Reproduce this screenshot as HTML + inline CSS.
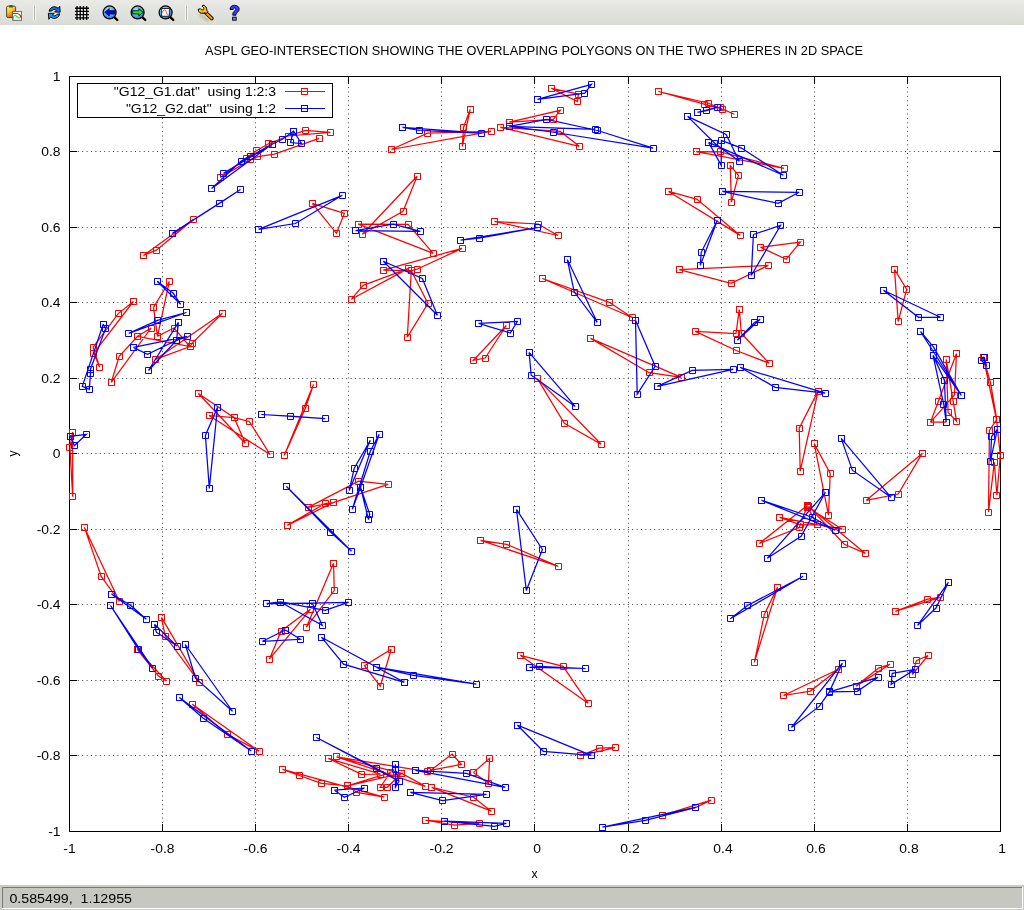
<!DOCTYPE html><html><head><meta charset="utf-8"><style>
html,body{margin:0;padding:0;width:1024px;height:910px;overflow:hidden;background:#fff;}
svg{display:block;position:absolute;left:0;top:0;}
text{font-family:"Liberation Sans",sans-serif;}
svg{will-change:transform;}
</style></head><body>
<svg width="1024" height="910" viewBox="0 0 1024 910">
<defs>
<linearGradient id="tbg" x1="0" y1="0" x2="0" y2="1"><stop offset="0" stop-color="#e9eae6"/><stop offset="1" stop-color="#d9dbd5"/></linearGradient>
<linearGradient id="clip" x1="0" y1="0" x2="0.6" y2="1"><stop offset="0" stop-color="#ffff48"/><stop offset="0.45" stop-color="#f8d030"/><stop offset="1" stop-color="#e04a08"/></linearGradient>
<radialGradient id="lens" cx="0.4" cy="0.35" r="0.7"><stop offset="0" stop-color="#b8e4ff"/><stop offset="0.6" stop-color="#4aaaf0"/><stop offset="1" stop-color="#1a78d0"/></radialGradient>
<linearGradient id="wr" x1="0" y1="0" x2="1" y2="1"><stop offset="0" stop-color="#ffff20"/><stop offset="0.45" stop-color="#ffd000"/><stop offset="1" stop-color="#ff9a00"/></linearGradient>
</defs>
<rect x="0" y="0" width="1024" height="25" fill="url(#tbg)"/>
<g>
<rect x="6.6" y="6.1" width="9" height="11.4" rx="1.5" fill="url(#clip)" stroke="#3c3418" stroke-width="0.9"/>
<path d="M9.2 7.6V6.1Q9.2 5 10.3 5H11.7Q12.8 5 12.8 6.1V7.6Z" fill="#4a4a4a"/>
<rect x="12.6" y="11.6" width="8.9" height="8.7" fill="#fff" stroke="#5a5a5a" stroke-width="0.9"/>
<path d="M12.9 20.1C13.2 18 13.6 15.4 14.8 15.2C16 15 16.6 16.2 17.4 17.2C18.2 18.2 19.2 18 19.8 17.6C20.6 17 21.1 15.4 21.5 13.8" stroke="#10e810" stroke-width="1.1" fill="none"/>
<path d="M12.7 13.5H17.4C18.6 13.5 19.6 14.6 20.4 15.9L21.5 17.8" stroke="#ff1010" stroke-width="1.1" fill="none"/>
</g>
<path d="M33.5 5V20.5M35.5 5V20.5" stroke="#f6f6f4" stroke-width="1"/><path d="M34.5 5.5V20" stroke="#b4b6b0" stroke-width="1"/>
<g stroke="#000" stroke-width="0.9" stroke-linejoin="round">
<path d="M49 11.2C49.6 8 52.4 6.4 55.2 6.8C56.4 7 57.4 7.6 58.1 8.3L59.8 6.3L60.2 12.2L54.6 12L56.4 10.1C55.1 9.1 52.9 9.1 51.9 10.9Z" fill="#1a6ae8"/>
<path d="M59.8 13.8C59.2 17 56.4 18.8 53.6 18.4C52.4 18.2 51.4 17.6 50.7 16.9L48.8 19.3L48.4 13.3L54.2 13.3L52.4 15.2C53.7 16.2 55.9 16.2 56.9 14.3Z" fill="#1a98f0"/>
</g>
<rect x="77" y="8.2" width="9.6" height="9.6" fill="#fff"/>
<g stroke="#000" stroke-width="1.35">
<path d="M77 6V20M80.2 6V20M83.4 6V20M86.6 6V20M75 8.2H89M75 11.4H89M75 14.6H89M75 17.8H89"/>
</g>
<g>
<path d="M113.5 16.3L117.3 20" stroke="#000" stroke-width="2.4" stroke-linecap="round"/>
<circle cx="109.6" cy="12.4" r="6.5" fill="url(#lens)" stroke="#000" stroke-width="1.2"/>
<path d="M104.8 12.3L109.2 8.6V10.7H114.8V13.9H109.2V16Z" fill="#0000ff" stroke="#000" stroke-width="0.8" stroke-linejoin="round"/>
</g>
<g>
<path d="M141.5 16.3L145.3 20" stroke="#000" stroke-width="2.4" stroke-linecap="round"/>
<circle cx="137.6" cy="12.4" r="6.5" fill="url(#lens)" stroke="#000" stroke-width="1.2"/>
<path d="M143.2 12.3L138.8 8.6V10.7H132.4V13.9H138.8V16Z" fill="#00ee00" stroke="#000" stroke-width="0.8" stroke-linejoin="round"/>
</g>
<g>
<path d="M169.5 16.3L173.3 20" stroke="#000" stroke-width="2.4" stroke-linecap="round"/>
<circle cx="165.6" cy="12.4" r="6.5" fill="url(#lens)" stroke="#000" stroke-width="1.2"/>
<rect x="161.7" y="8.6" width="7.6" height="7.6" fill="#fff" stroke="#000" stroke-width="0.8"/>
<path d="M162 12.8C162.8 11.8 163.6 9.8 164.6 9.8C165.8 9.8 166.4 12.4 167 13.8C167.5 14.9 168.3 15.2 169.2 15.2" stroke="#ee1010" stroke-width="0.8" fill="none"/>
</g>
<path d="M185.5 5V20.5M187.5 5V20.5" stroke="#f6f6f4" stroke-width="1"/><path d="M186.5 5.5V20" stroke="#b4b6b0" stroke-width="1"/>
<g>
<filter id="blr" x="-50%" y="-50%" width="200%" height="200%"><feGaussianBlur stdDeviation="0.8"/></filter>
<path d="M200.5 15L208 20.4" stroke="#a89e86" stroke-width="3" stroke-linecap="round" opacity="0.55" filter="url(#blr)"/>
<path d="M205.2 12.2L211.8 18.4" stroke="#000" stroke-width="3.8" stroke-linecap="round"/>
<path d="M205.2 12.2L211.8 18.4" stroke="#ff9c00" stroke-width="2" stroke-linecap="round"/>
<path d="M203 5.1C205.4 5.6 207 7.6 206.8 10.3L208 11.8L206.2 13.6L204.8 12.8C202.6 14 199.6 13.2 198.7 11.4L198.2 9.3L200.5 8.7C201 9.8 202.3 10.3 203.3 9.7C204.2 9.1 204 7.8 203.2 7.2L202.1 6.1Z" fill="url(#wr)" stroke="#000" stroke-width="1" stroke-linejoin="round"/>
</g>
<g>
<path d="M230 9.4C230 6.4 232.2 5.3 234.5 5.3C237.4 5.3 239.2 6.9 239.2 9.2C239.2 11.6 237.2 12.3 236.4 13.2C236 13.7 236 14.4 236 15.2H232.8C232.8 13.7 232.9 12.5 233.9 11.6C234.8 10.8 235.8 10.2 235.8 9.3C235.8 8.4 235.2 8 234.5 8C233.6 8 233.2 8.6 233.2 9.6Z" fill="#3a3aff" stroke="#000" stroke-width="0.9" stroke-linejoin="round"/>
<rect x="232.6" y="17.2" width="3.6" height="3" fill="#7a7aff" stroke="#000" stroke-width="0.9"/>
</g>

<rect x="0" y="885" width="1024" height="25" fill="#c9cbc5"/>
<rect x="2" y="887" width="1021" height="22" fill="#c5c7c0"/>
<path d="M2.5 908V887.5H1022" stroke="#7a7b76" fill="none"/>
<path d="M2 908.5H1022.5V887" stroke="#ffffff" fill="none"/>
<path d="M162.5 831V76M255.5 831V76M348.5 831V76M441.5 831V76M534.5 831V76M628.5 831V76M721.5 831V76M814.5 831V76M907.5 831V76" stroke="#404040" stroke-width="1" stroke-dasharray="1 3.4" stroke-dashoffset="0.7" fill="none"/>
<path d="M69 151.5H1001M69 227.5H1001M69 302.5H1001M69 378.5H1001M69 453.5H1001M69 529.5H1001M69 604.5H1001M69 680.5H1001M69 755.5H1001" stroke="#404040" stroke-width="1" stroke-dasharray="1 3.4" fill="none"/>
<path d="M69.5 832V824M69.5 76V84M162.5 832V824M162.5 76V84M255.5 832V824M255.5 76V84M348.5 832V824M348.5 76V84M441.5 832V824M441.5 76V84M534.5 832V824M534.5 76V84M628.5 832V824M628.5 76V84M721.5 832V824M721.5 76V84M814.5 832V824M814.5 76V84M907.5 832V824M907.5 76V84M1000.5 832V824M1000.5 76V84M69 76.5H77M1001 76.5H993M69 151.5H77M1001 151.5H993M69 227.5H77M1001 227.5H993M69 302.5H77M1001 302.5H993M69 378.5H77M1001 378.5H993M69 453.5H77M1001 453.5H993M69 529.5H77M1001 529.5H993M69 604.5H77M1001 604.5H993M69 680.5H77M1001 680.5H993M69 755.5H77M1001 755.5H993M69 831.5H77M1001 831.5H993" stroke="#000" stroke-width="1" fill="none"/>
<rect x="69.5" y="76.5" width="931" height="755" stroke="#000" stroke-width="1" fill="none"/>
<text transform="translate(60.6,835.9) scale(1.14,1)" font-size="12.2" text-anchor="end">-1</text>
<text transform="translate(69.5,853.3) scale(1.14,1)" font-size="12.2" text-anchor="middle">-1</text>
<text transform="translate(60.6,759.9) scale(1.14,1)" font-size="12.2" text-anchor="end">-0.8</text>
<text transform="translate(162.5,853.3) scale(1.14,1)" font-size="12.2" text-anchor="middle">-0.8</text>
<text transform="translate(60.6,684.9) scale(1.14,1)" font-size="12.2" text-anchor="end">-0.6</text>
<text transform="translate(255.5,853.3) scale(1.14,1)" font-size="12.2" text-anchor="middle">-0.6</text>
<text transform="translate(60.6,608.9) scale(1.14,1)" font-size="12.2" text-anchor="end">-0.4</text>
<text transform="translate(348.5,853.3) scale(1.14,1)" font-size="12.2" text-anchor="middle">-0.4</text>
<text transform="translate(60.6,533.9) scale(1.14,1)" font-size="12.2" text-anchor="end">-0.2</text>
<text transform="translate(441.5,853.3) scale(1.14,1)" font-size="12.2" text-anchor="middle">-0.2</text>
<text transform="translate(60.6,457.9) scale(1.14,1)" font-size="12.2" text-anchor="end">0</text>
<text transform="translate(537.0,853.3) scale(1.14,1)" font-size="12.2" text-anchor="middle">0</text>
<text transform="translate(60.6,382.9) scale(1.14,1)" font-size="12.2" text-anchor="end">0.2</text>
<text transform="translate(630.0,853.3) scale(1.14,1)" font-size="12.2" text-anchor="middle">0.2</text>
<text transform="translate(60.6,306.9) scale(1.14,1)" font-size="12.2" text-anchor="end">0.4</text>
<text transform="translate(723.0,853.3) scale(1.14,1)" font-size="12.2" text-anchor="middle">0.4</text>
<text transform="translate(60.6,231.9) scale(1.14,1)" font-size="12.2" text-anchor="end">0.6</text>
<text transform="translate(816.0,853.3) scale(1.14,1)" font-size="12.2" text-anchor="middle">0.6</text>
<text transform="translate(60.6,155.9) scale(1.14,1)" font-size="12.2" text-anchor="end">0.8</text>
<text transform="translate(909.0,853.3) scale(1.14,1)" font-size="12.2" text-anchor="middle">0.8</text>
<text transform="translate(60.6,80.9) scale(1.14,1)" font-size="12.2" text-anchor="end">1</text>
<text transform="translate(1002.0,853.3) scale(1.14,1)" font-size="12.2" text-anchor="middle">1</text>
<text x="534.5" y="878" font-size="12.2" text-anchor="middle">x</text>
<text transform="translate(17,453.5) rotate(-90)" font-size="12.2" text-anchor="middle">y</text>
<text x="205" y="54.6" font-size="12.2" textLength="658" lengthAdjust="spacingAndGlyphs">ASPL GEO-INTERSECTION SHOWING THE OVERLAPPING POLYGONS ON THE TWO SPHERES IN 2D SPACE</text>
<path d="M143.4 255.4 L156.4 250.2 L193.3 219.4 L143.4 255.4 M220.2 177.5 L246.1 158 L256.3 150.8 L268.5 143.8 L288 136 L330.4 132.3 L305.5 130.4 L288 136 M319.2 138.4 L274.4 154.2 L257.7 156.7 L250.7 159.9 L220.2 177.5 M153.5 307.3 L169.3 281.5 L157.5 336.3 L153.5 307.3 M111.3 382.3 L151.1 328 L137.6 336.3 L119.2 356.4 L111.3 382.3 M137.6 336.3 L190 346.5 L174 328 L157.5 336.3 M222.4 313.2 L192 343.4 L190 346.5 L155.5 359.4 L222.4 313.2 M133.4 301.5 L118.3 313.6 L93.2 347.2 L99.6 367.3 L93.8 353.1 L133.4 301.5 M198.35 393.5 L234.2 417.7 L245.2 443.3 L198.35 393.5 M209 415.5 L234.2 417.7 L249.3 421.5 L270.1 454.5 L209 415.5 M284.2 455.5 L305.4 408.3 L313.5 384.5 L284.2 455.5 M72.7 432 L69.9 447.4 L72.7 496.7 L72.7 432 M84.4 527.4 L101.2 576.4 L119.4 601.5 L84.4 527.4 M161.5 617.4 L199.4 682.3 L165.2 636.1 L161.5 617.4 M137.2 649.4 L166.2 681 L158.5 676.1 L137.2 649.4 M192.3 704.2 L227.2 734.4 L259 751.1 L192.3 704.2 M333.5 563.3 L334.3 590.4 L306.4 627.2 L333.5 563.3 M310.3 609.3 L281.2 631 L269.4 659.2 L310.3 609.3 M391.25 649.2 L364.5 665.6 L380.3 686.25 L391.25 649.2 M430.5 770.4 L452.2 754 L461.3 764.3 L430.5 770.4 M473.5 772.4 L489.6 758.4 L488.4 783.3 L473.5 772.4 M431.6 787.3 L473.5 797.25 L491.3 811.2 L431.6 787.3 M425.4 820.25 L454.4 825.1 L479.3 823.3 L425.4 820.25 M336.6 756.9 L427.2 771.6 M328.3 758.4 L361.5 774.4 L380.6 774.1 L328.3 758.4 M336.6 756.9 L425.4 786.3 L401.7 773.4 L336.6 756.9 M347.3 785.8 L390.4 772.6 L380.2 787.25 L387.2 787.25 L401.5 773.3 L347.3 785.8 M282.45 769.4 L299.3 775.5 L321.3 783.3 L347.3 785.8 L356.9 792.4 L384.25 797.2 L282.45 769.4 M391.4 149.5 L427.5 133.1 L491.1 131.4 L391.4 149.5 M470.2 109.4 L463.5 127.5 L462.3 146.3 L470.2 109.4 M551.2 88.3 L578.4 94.1 L577.4 101.5 L551.2 88.3 M509.3 122.05 L560.3 110.3 L553.3 119.4 L509.3 122.05 M500.2 127.3 L560.3 131.4 L579.3 146.3 L500.2 127.3 M417.1 176.3 L403.1 211.2 L362.4 234.2 L417.1 176.3 M358.2 224.1 L408.1 224.3 L433.2 253.4 L358.2 224.1 M383.3 270.1 L462 248.4 L417.5 269 L411.3 270.7 L383.3 270.1 M363.2 285.3 L408.1 268.6 L351.3 299.3 L363.2 285.3 M411.3 270.7 L407.3 337.1 L428 303.5 L411.3 270.7 M312.3 203.4 L344.4 213.5 L336.4 233.4 L312.3 203.4 M494.5 221.5 L538.1 224 L558 235.5 L494.5 221.5 M542.4 278.5 L609.2 302.3 L632.2 317.5 L542.4 278.5 M506.3 325.5 L473.4 360.3 L485.2 358 L506.3 325.5 M537.4 378.6 L564.3 423.4 L601.2 444.2 L537.4 378.6 M308.15 507.4 L358.5 481.2 L388.15 484.3 L333.1 502.6 L308.15 507.4 M287.2 525.4 L325.1 503.5 L333.1 502.6 L287.2 525.4 M480.5 540.3 L506.5 544.3 L558.2 566.3 L480.5 540.3 M520.2 655.3 L563.1 666.3 L588.1 703.2 L520.2 655.3 M580.4 755.7 L599.3 748.2 L615.2 747.6 L580.4 755.7 M662.2 815.3 L695.9 807.3 L711.2 800.2 L662.2 815.3 M658.45 91.5 L704.2 104.1 L722.6 109.05 L734.4 114.3 L708.55 103.25 L658.45 91.5 M696.25 151.6 L720 151.9 L784.1 168.3 L696.25 151.6 M730.2 165.3 L738.4 175.3 L731.4 202.2 L730.2 165.3 M668.5 191.45 L697.1 199.35 L740.2 235.4 L668.5 191.45 M760.4 247.3 L800.3 242.1 L786.25 259.3 L760.4 247.3 M679.2 269.7 L768.3 265.45 L731.05 283.4 L679.2 269.7 M590.55 338.4 L649.1 372.7 L681.4 377.4 L590.55 338.4 M739.3 309.5 L736 333.5 L695.2 331.4 L736.2 350.5 L769.05 363.2 L741.4 333.5 L739.3 309.5 M818.1 391.1 L799.2 428.2 L800.2 471.2 L818.1 391.1 M814.2 443.6 L830.2 473.5 L828.5 515.1 L814.2 443.6 M922.2 453.4 L866.4 500.3 L898.2 494 L922.2 453.4 M807.3 505.5 L759.4 543.4 L799.2 527.6 L807.3 505.5 M779.65 517.4 L817.1 524.6 L800.3 524.9 L779.65 517.4 M808.6 506.4 L844.3 544.2 L865.4 553.4 L808.6 506.4 M807.6 507.2 L842.3 529.2 L817.1 524.6 L807.6 507.2 M777.5 587.3 L764.3 614.4 L754.4 662.3 L777.5 587.3 M838.45 669.2 L810.4 691.1 L783.5 695.5 L838.45 669.2 M895.25 611.3 L927.6 599.2 L940.4 597.45 L895.25 611.3 M856.05 686.1 L878.55 668.1 L890 664.3 L856.05 686.1 M912.3 674.6 L916.35 660.6 L928.1 655.5 L912.3 674.6 M894.5 269.4 L906.6 289.3 L898.2 321.5 L894.5 269.4 M946.2 359.3 L948.1 412.4 L956.5 421.2 L953.25 401.55 L946.2 359.3 M956.5 353.5 L954.5 395.1 L930.5 422.1 L938.4 401.2 L956.5 353.5 M930.5 422.1 L946.2 422.1 M983.2 357 L990.5 382.6 L996.75 419.3 L989.45 430.35 L988.5 512.1 L994.3 462.4 L996.9 495.1 L1000.3 455.25 L996.5 419.6 L983.2 357 M720.4 107.6" stroke="#ff0000" stroke-width="1.25" fill="none" stroke-linejoin="miter"/>
<path d="M140.5 252.5h6v6h-6z M153.5 247.5h6v6h-6z M190.5 216.5h6v6h-6z M140.5 252.5h6v6h-6z M217.5 174.5h6v6h-6z M243.5 155.5h6v6h-6z M253.5 147.5h6v6h-6z M265.5 140.5h6v6h-6z M285.5 133.5h6v6h-6z M327.5 129.5h6v6h-6z M302.5 127.5h6v6h-6z M285.5 133.5h6v6h-6z M316.5 135.5h6v6h-6z M271.5 151.5h6v6h-6z M254.5 153.5h6v6h-6z M247.5 156.5h6v6h-6z M217.5 174.5h6v6h-6z M150.5 304.5h6v6h-6z M166.5 278.5h6v6h-6z M154.5 333.5h6v6h-6z M150.5 304.5h6v6h-6z M108.5 379.5h6v6h-6z M148.5 325.5h6v6h-6z M134.5 333.5h6v6h-6z M116.5 353.5h6v6h-6z M108.5 379.5h6v6h-6z M134.5 333.5h6v6h-6z M187.5 343.5h6v6h-6z M171.5 325.5h6v6h-6z M154.5 333.5h6v6h-6z M219.5 310.5h6v6h-6z M189.5 340.5h6v6h-6z M187.5 343.5h6v6h-6z M152.5 356.5h6v6h-6z M219.5 310.5h6v6h-6z M130.5 298.5h6v6h-6z M115.5 310.5h6v6h-6z M90.5 344.5h6v6h-6z M96.5 364.5h6v6h-6z M90.5 350.5h6v6h-6z M130.5 298.5h6v6h-6z M195.5 390.5h6v6h-6z M231.5 414.5h6v6h-6z M242.5 440.5h6v6h-6z M195.5 390.5h6v6h-6z M206.5 412.5h6v6h-6z M231.5 414.5h6v6h-6z M246.5 418.5h6v6h-6z M267.5 451.5h6v6h-6z M206.5 412.5h6v6h-6z M281.5 452.5h6v6h-6z M302.5 405.5h6v6h-6z M310.5 381.5h6v6h-6z M281.5 452.5h6v6h-6z M69.5 429.5h6v6h-6z M66.5 444.5h6v6h-6z M69.5 493.5h6v6h-6z M69.5 429.5h6v6h-6z M81.5 524.5h6v6h-6z M98.5 573.5h6v6h-6z M116.5 598.5h6v6h-6z M81.5 524.5h6v6h-6z M158.5 614.5h6v6h-6z M196.5 679.5h6v6h-6z M162.5 633.5h6v6h-6z M158.5 614.5h6v6h-6z M134.5 646.5h6v6h-6z M163.5 678.5h6v6h-6z M155.5 673.5h6v6h-6z M134.5 646.5h6v6h-6z M189.5 701.5h6v6h-6z M224.5 731.5h6v6h-6z M256.5 748.5h6v6h-6z M189.5 701.5h6v6h-6z M330.5 560.5h6v6h-6z M331.5 587.5h6v6h-6z M303.5 624.5h6v6h-6z M330.5 560.5h6v6h-6z M307.5 606.5h6v6h-6z M278.5 628.5h6v6h-6z M266.5 656.5h6v6h-6z M307.5 606.5h6v6h-6z M388.5 646.5h6v6h-6z M361.5 662.5h6v6h-6z M377.5 683.5h6v6h-6z M388.5 646.5h6v6h-6z M427.5 767.5h6v6h-6z M449.5 751.5h6v6h-6z M458.5 761.5h6v6h-6z M427.5 767.5h6v6h-6z M470.5 769.5h6v6h-6z M486.5 755.5h6v6h-6z M485.5 780.5h6v6h-6z M470.5 769.5h6v6h-6z M428.5 784.5h6v6h-6z M470.5 794.5h6v6h-6z M488.5 808.5h6v6h-6z M428.5 784.5h6v6h-6z M422.5 817.5h6v6h-6z M451.5 822.5h6v6h-6z M476.5 820.5h6v6h-6z M422.5 817.5h6v6h-6z M333.5 753.5h6v6h-6z M424.5 768.5h6v6h-6z M325.5 755.5h6v6h-6z M358.5 771.5h6v6h-6z M377.5 771.5h6v6h-6z M325.5 755.5h6v6h-6z M333.5 753.5h6v6h-6z M422.5 783.5h6v6h-6z M398.5 770.5h6v6h-6z M333.5 753.5h6v6h-6z M344.5 782.5h6v6h-6z M387.5 769.5h6v6h-6z M377.5 784.5h6v6h-6z M384.5 784.5h6v6h-6z M398.5 770.5h6v6h-6z M344.5 782.5h6v6h-6z M279.5 766.5h6v6h-6z M296.5 772.5h6v6h-6z M318.5 780.5h6v6h-6z M344.5 782.5h6v6h-6z M353.5 789.5h6v6h-6z M381.5 794.5h6v6h-6z M279.5 766.5h6v6h-6z M388.5 146.5h6v6h-6z M424.5 130.5h6v6h-6z M488.5 128.5h6v6h-6z M388.5 146.5h6v6h-6z M467.5 106.5h6v6h-6z M460.5 124.5h6v6h-6z M459.5 143.5h6v6h-6z M467.5 106.5h6v6h-6z M548.5 85.5h6v6h-6z M575.5 91.5h6v6h-6z M574.5 98.5h6v6h-6z M548.5 85.5h6v6h-6z M506.5 119.5h6v6h-6z M557.5 107.5h6v6h-6z M550.5 116.5h6v6h-6z M506.5 119.5h6v6h-6z M497.5 124.5h6v6h-6z M557.5 128.5h6v6h-6z M576.5 143.5h6v6h-6z M497.5 124.5h6v6h-6z M414.5 173.5h6v6h-6z M400.5 208.5h6v6h-6z M359.5 231.5h6v6h-6z M414.5 173.5h6v6h-6z M355.5 221.5h6v6h-6z M405.5 221.5h6v6h-6z M430.5 250.5h6v6h-6z M355.5 221.5h6v6h-6z M380.5 267.5h6v6h-6z M459.5 245.5h6v6h-6z M414.5 266.5h6v6h-6z M408.5 267.5h6v6h-6z M380.5 267.5h6v6h-6z M360.5 282.5h6v6h-6z M405.5 265.5h6v6h-6z M348.5 296.5h6v6h-6z M360.5 282.5h6v6h-6z M408.5 267.5h6v6h-6z M404.5 334.5h6v6h-6z M425.5 300.5h6v6h-6z M408.5 267.5h6v6h-6z M309.5 200.5h6v6h-6z M341.5 210.5h6v6h-6z M333.5 230.5h6v6h-6z M309.5 200.5h6v6h-6z M491.5 218.5h6v6h-6z M535.5 221.5h6v6h-6z M555.5 232.5h6v6h-6z M491.5 218.5h6v6h-6z M539.5 275.5h6v6h-6z M606.5 299.5h6v6h-6z M629.5 314.5h6v6h-6z M539.5 275.5h6v6h-6z M503.5 322.5h6v6h-6z M470.5 357.5h6v6h-6z M482.5 355.5h6v6h-6z M503.5 322.5h6v6h-6z M534.5 375.5h6v6h-6z M561.5 420.5h6v6h-6z M598.5 441.5h6v6h-6z M534.5 375.5h6v6h-6z M305.5 504.5h6v6h-6z M355.5 478.5h6v6h-6z M385.5 481.5h6v6h-6z M330.5 499.5h6v6h-6z M305.5 504.5h6v6h-6z M284.5 522.5h6v6h-6z M322.5 500.5h6v6h-6z M330.5 499.5h6v6h-6z M284.5 522.5h6v6h-6z M477.5 537.5h6v6h-6z M503.5 541.5h6v6h-6z M555.5 563.5h6v6h-6z M477.5 537.5h6v6h-6z M517.5 652.5h6v6h-6z M560.5 663.5h6v6h-6z M585.5 700.5h6v6h-6z M517.5 652.5h6v6h-6z M577.5 752.5h6v6h-6z M596.5 745.5h6v6h-6z M612.5 744.5h6v6h-6z M577.5 752.5h6v6h-6z M659.5 812.5h6v6h-6z M692.5 804.5h6v6h-6z M708.5 797.5h6v6h-6z M659.5 812.5h6v6h-6z M655.5 88.5h6v6h-6z M701.5 101.5h6v6h-6z M719.5 106.5h6v6h-6z M731.5 111.5h6v6h-6z M705.5 100.5h6v6h-6z M655.5 88.5h6v6h-6z M693.5 148.5h6v6h-6z M717.5 148.5h6v6h-6z M781.5 165.5h6v6h-6z M693.5 148.5h6v6h-6z M727.5 162.5h6v6h-6z M735.5 172.5h6v6h-6z M728.5 199.5h6v6h-6z M727.5 162.5h6v6h-6z M665.5 188.5h6v6h-6z M694.5 196.5h6v6h-6z M737.5 232.5h6v6h-6z M665.5 188.5h6v6h-6z M757.5 244.5h6v6h-6z M797.5 239.5h6v6h-6z M783.5 256.5h6v6h-6z M757.5 244.5h6v6h-6z M676.5 266.5h6v6h-6z M765.5 262.5h6v6h-6z M728.5 280.5h6v6h-6z M676.5 266.5h6v6h-6z M587.5 335.5h6v6h-6z M646.5 369.5h6v6h-6z M678.5 374.5h6v6h-6z M587.5 335.5h6v6h-6z M736.5 306.5h6v6h-6z M733.5 330.5h6v6h-6z M692.5 328.5h6v6h-6z M733.5 347.5h6v6h-6z M766.5 360.5h6v6h-6z M738.5 330.5h6v6h-6z M736.5 306.5h6v6h-6z M815.5 388.5h6v6h-6z M796.5 425.5h6v6h-6z M797.5 468.5h6v6h-6z M815.5 388.5h6v6h-6z M811.5 440.5h6v6h-6z M827.5 470.5h6v6h-6z M825.5 512.5h6v6h-6z M811.5 440.5h6v6h-6z M919.5 450.5h6v6h-6z M863.5 497.5h6v6h-6z M895.5 491.5h6v6h-6z M919.5 450.5h6v6h-6z M804.5 502.5h6v6h-6z M756.5 540.5h6v6h-6z M796.5 524.5h6v6h-6z M804.5 502.5h6v6h-6z M776.5 514.5h6v6h-6z M814.5 521.5h6v6h-6z M797.5 521.5h6v6h-6z M776.5 514.5h6v6h-6z M805.5 503.5h6v6h-6z M841.5 541.5h6v6h-6z M862.5 550.5h6v6h-6z M805.5 503.5h6v6h-6z M804.5 504.5h6v6h-6z M839.5 526.5h6v6h-6z M814.5 521.5h6v6h-6z M804.5 504.5h6v6h-6z M774.5 584.5h6v6h-6z M761.5 611.5h6v6h-6z M751.5 659.5h6v6h-6z M774.5 584.5h6v6h-6z M835.5 666.5h6v6h-6z M807.5 688.5h6v6h-6z M780.5 692.5h6v6h-6z M835.5 666.5h6v6h-6z M892.5 608.5h6v6h-6z M924.5 596.5h6v6h-6z M937.5 594.5h6v6h-6z M892.5 608.5h6v6h-6z M853.5 683.5h6v6h-6z M875.5 665.5h6v6h-6z M887.5 661.5h6v6h-6z M853.5 683.5h6v6h-6z M909.5 671.5h6v6h-6z M913.5 657.5h6v6h-6z M925.5 652.5h6v6h-6z M909.5 671.5h6v6h-6z M891.5 266.5h6v6h-6z M903.5 286.5h6v6h-6z M895.5 318.5h6v6h-6z M891.5 266.5h6v6h-6z M943.5 356.5h6v6h-6z M945.5 409.5h6v6h-6z M953.5 418.5h6v6h-6z M950.5 398.5h6v6h-6z M943.5 356.5h6v6h-6z M953.5 350.5h6v6h-6z M951.5 392.5h6v6h-6z M927.5 419.5h6v6h-6z M935.5 398.5h6v6h-6z M953.5 350.5h6v6h-6z M927.5 419.5h6v6h-6z M943.5 419.5h6v6h-6z M980.5 354.5h6v6h-6z M987.5 379.5h6v6h-6z M993.5 416.5h6v6h-6z M986.5 427.5h6v6h-6z M985.5 509.5h6v6h-6z M991.5 459.5h6v6h-6z M993.5 492.5h6v6h-6z M997.5 452.5h6v6h-6z M993.5 416.5h6v6h-6z M980.5 354.5h6v6h-6z M717.5 104.5h6v6h-6z" stroke="#ff0000" stroke-width="1" fill="none"/>
<path d="M172.4 233.4 L219.3 203.4 L240.5 189.4 L172.4 233.4 M211.6 188.4 L241.3 161 L250.4 156.1 L272.2 144.1 L211.6 188.4 M223.5 173.4 L272.2 144.1 L282.4 139.2 L293.6 131.1 L301.4 143.5 L290.5 142.5 L293.6 131.1 M157.3 281.5 L173.3 293.3 L180.6 304.3 L157.3 281.5 M186.4 312.5 L157.5 320.4 L128.7 333.3 L186.4 312.5 M178.4 322.3 L148.5 370.5 L176.6 340.3 L178.4 322.3 M133.3 347.4 L187.4 336.3 L176.6 340.3 L147.5 354.4 L133.3 347.4 M103.2 324.2 L82.3 386.3 L89.3 389.3 L90.5 373.4 L90.5 369.2 L105.6 328.4 L103.2 324.2 M217.5 407.2 L205.4 435.4 L209.3 488.4 L217.5 407.2 M261.5 414.5 L290.3 416.2 L325.2 418.6 L261.5 414.5 M70.4 436.3 L86.3 434.3 L74.4 445.7 L70.4 436.3 M111.5 594 L130.6 605.3 L146.4 619.3 L111.5 594 M110.5 605.5 L138.1 649 L152.6 668.2 L110.5 605.5 M154.5 624.3 L156.3 632.2 L177 646.1 L154.5 624.3 M185.3 644.5 L195.5 678.1 L232.5 711.25 L185.3 644.5 M179.4 697.5 L203.3 718.3 L251.25 751.1 L179.4 697.5 M266.6 603.5 L312.25 603.1 L348.3 602.3 L325.2 610.3 L280.4 602 L266.6 603.5 M280.4 602 L322.2 625.2 L312.25 603.1 M285.4 630 L262.5 641.3 L300.3 639.3 L285.4 630 M321.4 637.2 L343.5 664.2 L404.4 682.3 L321.4 637.2 M376.4 667.2 L413.4 675.3 L476.4 684.2 L376.4 667.2 L404.4 682.3 M410.3 792.4 L486.5 794.3 L442.5 800.5 L410.3 792.4 M415.4 770.4 L466.4 773.4 L505.2 787.3 L415.4 770.4 M444.45 821.1 L506.3 823.3 L494.25 826.25 L444.45 821.1 M395.4 764.3 L395.4 769.7 L399 781.1 L395.4 787.3 L395.4 764.3 M334.45 790.2 L364.5 788 L344.4 797.2 L334.45 790.2 M316.4 737.45 L376.5 768.5 L399 781.1 L316.4 737.45 M402.5 127.3 L419.55 130.5 L481.4 133.1 L402.5 127.3 M537.5 99.4 L591.4 84.3 L584.9 93.2 L537.5 99.4 M509.3 126.45 L546.6 119.4 L597.6 130.5 L653.1 148.1 L553.6 132.25 L509.3 126.45 L595.5 129.3 M355.5 230.6 L393.1 224.1 L420.3 231.4 L355.5 230.6 M383.3 261.3 L422.35 278.4 L437.4 315.2 L383.3 261.3 M258.6 229.3 L295.4 223.5 L342.3 195.3 L258.6 229.3 M460.6 240.1 L479.1 238.2 L537.2 227.7 L460.6 240.1 M567.3 259.6 L574.3 292.1 L597.2 322.3 L567.3 259.6 M478.5 323.4 L517.3 321.45 L510.3 333.05 L478.5 323.4 M529.1 352.4 L531.2 375.2 L575.2 406.4 L529.1 352.4 M286.5 486.5 L330.8 532.3 L351.5 551.2 L286.5 486.5 M370.3 440.3 L354.15 468.5 L349.2 490.5 L370.3 440.3 M379.2 434.3 L370.3 451.2 L352.3 509.2 L360.5 487.2 L379.2 434.3 M360.5 487.2 L369.7 514.15 L368.5 519.7 L360.5 487.2 M516.5 509.4 L542.4 549.5 L526.3 590.5 L516.5 509.4 M529.45 667.4 L539.3 666.3 L585.5 668.5 L529.45 667.4 M517.4 725.2 L543.3 751.3 L591.4 755.3 L517.4 725.2 M602.45 827.2 L645.3 820.3 L695.9 807.3 L602.45 827.2 M687.5 116.4 L726.1 134.4 L739.3 161.25 L714.7 143.3 L687.5 116.4 M708.55 142.4 L783.3 175.3 L741.4 148.1 L721.4 140.5 L721.2 165.3 L708.55 142.4 M697.5 112.4 L706.4 110.6 L717.3 107.3 L697.5 112.4 M722.3 191.45 L799.1 192.3 L778.3 203.4 L722.3 191.45 M717.3 220.45 L701.2 252.3 L700.3 265.3 L717.3 220.45 M753.4 234.5 L780.6 225.4 L751.3 275.5 L753.4 234.5 M635.5 320.35 L655.2 366.3 L637.2 394.2 L635.5 320.35 M760.2 319.3 L754.5 322.4 L737.3 340.25 L760.2 319.3 M657.3 386.4 L692.1 370.4 L733.2 369.4 L657.3 386.4 M740.1 367.3 L775.2 387.4 L825.2 393.2 L740.1 367.3 M841.2 438.4 L852.3 470.2 L891 497.3 L841.2 438.4 M825.45 492.3 L767.3 558.2 L801.1 536.3 L825.45 492.3 M761.5 500.35 L812.2 517.2 L835.3 530.2 L761.5 500.35 M803.2 576.2 L747.5 605.5 L730.3 618.7 L803.2 576.2 M842.4 663.2 L829.2 692.1 L819.3 706.4 L791.4 727.5 L842.4 663.2 M948.4 582.3 L936 608 L917.6 625.4 L948.4 582.3 M829.3 691.9 L878 677.3 L857.3 691.3 L829.3 691.9 M892.1 673.4 L915.3 669.4 L891.2 684.3 L892.1 673.4 M883.4 290.3 L918.5 317.3 L940.4 317.3 L883.4 290.3 M920.5 331.5 L933.6 347.2 L961.35 395.5 L920.5 331.5 M933 355.3 L944.4 380.2 L946.2 422.1 L943.8 404.6 L933 355.3 M984.2 357 L981.1 360.3 L986.3 365.35 L984.2 357 M997.3 429.3 L991.6 436.5 L990.4 461.3 L997.3 429.3 M933 355.3 L961.35 395.5" stroke="#0000ff" stroke-width="1.25" fill="none" stroke-linejoin="miter"/>
<path d="M169.5 230.5h6v6h-6z M216.5 200.5h6v6h-6z M237.5 186.5h6v6h-6z M169.5 230.5h6v6h-6z M208.5 185.5h6v6h-6z M238.5 158.5h6v6h-6z M247.5 153.5h6v6h-6z M269.5 141.5h6v6h-6z M208.5 185.5h6v6h-6z M220.5 170.5h6v6h-6z M269.5 141.5h6v6h-6z M279.5 136.5h6v6h-6z M290.5 128.5h6v6h-6z M298.5 140.5h6v6h-6z M287.5 139.5h6v6h-6z M290.5 128.5h6v6h-6z M154.5 278.5h6v6h-6z M170.5 290.5h6v6h-6z M177.5 301.5h6v6h-6z M154.5 278.5h6v6h-6z M183.5 309.5h6v6h-6z M154.5 317.5h6v6h-6z M125.5 330.5h6v6h-6z M183.5 309.5h6v6h-6z M175.5 319.5h6v6h-6z M145.5 367.5h6v6h-6z M173.5 337.5h6v6h-6z M175.5 319.5h6v6h-6z M130.5 344.5h6v6h-6z M184.5 333.5h6v6h-6z M173.5 337.5h6v6h-6z M144.5 351.5h6v6h-6z M130.5 344.5h6v6h-6z M100.5 321.5h6v6h-6z M79.5 383.5h6v6h-6z M86.5 386.5h6v6h-6z M87.5 370.5h6v6h-6z M87.5 366.5h6v6h-6z M102.5 325.5h6v6h-6z M100.5 321.5h6v6h-6z M214.5 404.5h6v6h-6z M202.5 432.5h6v6h-6z M206.5 485.5h6v6h-6z M214.5 404.5h6v6h-6z M258.5 411.5h6v6h-6z M287.5 413.5h6v6h-6z M322.5 415.5h6v6h-6z M258.5 411.5h6v6h-6z M67.5 433.5h6v6h-6z M83.5 431.5h6v6h-6z M71.5 442.5h6v6h-6z M67.5 433.5h6v6h-6z M108.5 591.5h6v6h-6z M127.5 602.5h6v6h-6z M143.5 616.5h6v6h-6z M108.5 591.5h6v6h-6z M107.5 602.5h6v6h-6z M135.5 646.5h6v6h-6z M149.5 665.5h6v6h-6z M107.5 602.5h6v6h-6z M151.5 621.5h6v6h-6z M153.5 629.5h6v6h-6z M174.5 643.5h6v6h-6z M151.5 621.5h6v6h-6z M182.5 641.5h6v6h-6z M192.5 675.5h6v6h-6z M229.5 708.5h6v6h-6z M182.5 641.5h6v6h-6z M176.5 694.5h6v6h-6z M200.5 715.5h6v6h-6z M248.5 748.5h6v6h-6z M176.5 694.5h6v6h-6z M263.5 600.5h6v6h-6z M309.5 600.5h6v6h-6z M345.5 599.5h6v6h-6z M322.5 607.5h6v6h-6z M277.5 599.5h6v6h-6z M263.5 600.5h6v6h-6z M277.5 599.5h6v6h-6z M319.5 622.5h6v6h-6z M309.5 600.5h6v6h-6z M282.5 627.5h6v6h-6z M259.5 638.5h6v6h-6z M297.5 636.5h6v6h-6z M282.5 627.5h6v6h-6z M318.5 634.5h6v6h-6z M340.5 661.5h6v6h-6z M401.5 679.5h6v6h-6z M318.5 634.5h6v6h-6z M373.5 664.5h6v6h-6z M410.5 672.5h6v6h-6z M473.5 681.5h6v6h-6z M373.5 664.5h6v6h-6z M401.5 679.5h6v6h-6z M407.5 789.5h6v6h-6z M483.5 791.5h6v6h-6z M439.5 797.5h6v6h-6z M407.5 789.5h6v6h-6z M412.5 767.5h6v6h-6z M463.5 770.5h6v6h-6z M502.5 784.5h6v6h-6z M412.5 767.5h6v6h-6z M441.5 818.5h6v6h-6z M503.5 820.5h6v6h-6z M491.5 823.5h6v6h-6z M441.5 818.5h6v6h-6z M392.5 761.5h6v6h-6z M392.5 766.5h6v6h-6z M396.5 778.5h6v6h-6z M392.5 784.5h6v6h-6z M392.5 761.5h6v6h-6z M331.5 787.5h6v6h-6z M361.5 785.5h6v6h-6z M341.5 794.5h6v6h-6z M331.5 787.5h6v6h-6z M313.5 734.5h6v6h-6z M373.5 765.5h6v6h-6z M396.5 778.5h6v6h-6z M313.5 734.5h6v6h-6z M399.5 124.5h6v6h-6z M416.5 127.5h6v6h-6z M478.5 130.5h6v6h-6z M399.5 124.5h6v6h-6z M534.5 96.5h6v6h-6z M588.5 81.5h6v6h-6z M581.5 90.5h6v6h-6z M534.5 96.5h6v6h-6z M506.5 123.5h6v6h-6z M543.5 116.5h6v6h-6z M594.5 127.5h6v6h-6z M650.5 145.5h6v6h-6z M550.5 129.5h6v6h-6z M506.5 123.5h6v6h-6z M592.5 126.5h6v6h-6z M352.5 227.5h6v6h-6z M390.5 221.5h6v6h-6z M417.5 228.5h6v6h-6z M352.5 227.5h6v6h-6z M380.5 258.5h6v6h-6z M419.5 275.5h6v6h-6z M434.5 312.5h6v6h-6z M380.5 258.5h6v6h-6z M255.5 226.5h6v6h-6z M292.5 220.5h6v6h-6z M339.5 192.5h6v6h-6z M255.5 226.5h6v6h-6z M457.5 237.5h6v6h-6z M476.5 235.5h6v6h-6z M534.5 224.5h6v6h-6z M457.5 237.5h6v6h-6z M564.5 256.5h6v6h-6z M571.5 289.5h6v6h-6z M594.5 319.5h6v6h-6z M564.5 256.5h6v6h-6z M475.5 320.5h6v6h-6z M514.5 318.5h6v6h-6z M507.5 330.5h6v6h-6z M475.5 320.5h6v6h-6z M526.5 349.5h6v6h-6z M528.5 372.5h6v6h-6z M572.5 403.5h6v6h-6z M526.5 349.5h6v6h-6z M283.5 483.5h6v6h-6z M327.5 529.5h6v6h-6z M348.5 548.5h6v6h-6z M283.5 483.5h6v6h-6z M367.5 437.5h6v6h-6z M351.5 465.5h6v6h-6z M346.5 487.5h6v6h-6z M367.5 437.5h6v6h-6z M376.5 431.5h6v6h-6z M367.5 448.5h6v6h-6z M349.5 506.5h6v6h-6z M357.5 484.5h6v6h-6z M376.5 431.5h6v6h-6z M357.5 484.5h6v6h-6z M366.5 511.5h6v6h-6z M365.5 516.5h6v6h-6z M357.5 484.5h6v6h-6z M513.5 506.5h6v6h-6z M539.5 546.5h6v6h-6z M523.5 587.5h6v6h-6z M513.5 506.5h6v6h-6z M526.5 664.5h6v6h-6z M536.5 663.5h6v6h-6z M582.5 665.5h6v6h-6z M526.5 664.5h6v6h-6z M514.5 722.5h6v6h-6z M540.5 748.5h6v6h-6z M588.5 752.5h6v6h-6z M514.5 722.5h6v6h-6z M599.5 824.5h6v6h-6z M642.5 817.5h6v6h-6z M692.5 804.5h6v6h-6z M599.5 824.5h6v6h-6z M684.5 113.5h6v6h-6z M723.5 131.5h6v6h-6z M736.5 158.5h6v6h-6z M711.5 140.5h6v6h-6z M684.5 113.5h6v6h-6z M705.5 139.5h6v6h-6z M780.5 172.5h6v6h-6z M738.5 145.5h6v6h-6z M718.5 137.5h6v6h-6z M718.5 162.5h6v6h-6z M705.5 139.5h6v6h-6z M694.5 109.5h6v6h-6z M703.5 107.5h6v6h-6z M714.5 104.5h6v6h-6z M694.5 109.5h6v6h-6z M719.5 188.5h6v6h-6z M796.5 189.5h6v6h-6z M775.5 200.5h6v6h-6z M719.5 188.5h6v6h-6z M714.5 217.5h6v6h-6z M698.5 249.5h6v6h-6z M697.5 262.5h6v6h-6z M714.5 217.5h6v6h-6z M750.5 231.5h6v6h-6z M777.5 222.5h6v6h-6z M748.5 272.5h6v6h-6z M750.5 231.5h6v6h-6z M632.5 317.5h6v6h-6z M652.5 363.5h6v6h-6z M634.5 391.5h6v6h-6z M632.5 317.5h6v6h-6z M757.5 316.5h6v6h-6z M751.5 319.5h6v6h-6z M734.5 337.5h6v6h-6z M757.5 316.5h6v6h-6z M654.5 383.5h6v6h-6z M689.5 367.5h6v6h-6z M730.5 366.5h6v6h-6z M654.5 383.5h6v6h-6z M737.5 364.5h6v6h-6z M772.5 384.5h6v6h-6z M822.5 390.5h6v6h-6z M737.5 364.5h6v6h-6z M838.5 435.5h6v6h-6z M849.5 467.5h6v6h-6z M888.5 494.5h6v6h-6z M838.5 435.5h6v6h-6z M822.5 489.5h6v6h-6z M764.5 555.5h6v6h-6z M798.5 533.5h6v6h-6z M822.5 489.5h6v6h-6z M758.5 497.5h6v6h-6z M809.5 514.5h6v6h-6z M832.5 527.5h6v6h-6z M758.5 497.5h6v6h-6z M800.5 573.5h6v6h-6z M744.5 602.5h6v6h-6z M727.5 615.5h6v6h-6z M800.5 573.5h6v6h-6z M839.5 660.5h6v6h-6z M826.5 689.5h6v6h-6z M816.5 703.5h6v6h-6z M788.5 724.5h6v6h-6z M839.5 660.5h6v6h-6z M945.5 579.5h6v6h-6z M933.5 605.5h6v6h-6z M914.5 622.5h6v6h-6z M945.5 579.5h6v6h-6z M826.5 688.5h6v6h-6z M875.5 674.5h6v6h-6z M854.5 688.5h6v6h-6z M826.5 688.5h6v6h-6z M889.5 670.5h6v6h-6z M912.5 666.5h6v6h-6z M888.5 681.5h6v6h-6z M889.5 670.5h6v6h-6z M880.5 287.5h6v6h-6z M915.5 314.5h6v6h-6z M937.5 314.5h6v6h-6z M880.5 287.5h6v6h-6z M917.5 328.5h6v6h-6z M930.5 344.5h6v6h-6z M958.5 392.5h6v6h-6z M917.5 328.5h6v6h-6z M930.5 352.5h6v6h-6z M941.5 377.5h6v6h-6z M943.5 419.5h6v6h-6z M940.5 401.5h6v6h-6z M930.5 352.5h6v6h-6z M981.5 354.5h6v6h-6z M978.5 357.5h6v6h-6z M983.5 362.5h6v6h-6z M981.5 354.5h6v6h-6z M994.5 426.5h6v6h-6z M988.5 433.5h6v6h-6z M987.5 458.5h6v6h-6z M994.5 426.5h6v6h-6z M930.5 352.5h6v6h-6z M958.5 392.5h6v6h-6z" stroke="#0000ff" stroke-width="1" fill="none"/>
<rect x="77.5" y="83.5" width="255" height="34" fill="#fff" stroke="#000" stroke-width="1"/>
<text x="113.8" y="95.8" font-size="12.2" textLength="162.2" lengthAdjust="spacingAndGlyphs" xml:space="preserve">"G12_G1.dat"  using 1:2:3</text>
<text x="125.9" y="112.5" font-size="12.2" textLength="150.1" lengthAdjust="spacingAndGlyphs" xml:space="preserve">"G12_G2.dat"  using 1:2</text>
<path d="M285 91.5H325" stroke="#f00"/><rect x="301.5" y="88.5" width="6" height="6" fill="none" stroke="#f00"/>
<path d="M285 108.5H325" stroke="#00f"/><rect x="301.5" y="105.5" width="6" height="6" fill="none" stroke="#00f"/>
<text x="9.4" y="903" font-size="12.5" textLength="122.6" lengthAdjust="spacingAndGlyphs" xml:space="preserve">0.585499,  1.12955</text>
</svg>
</body></html>
